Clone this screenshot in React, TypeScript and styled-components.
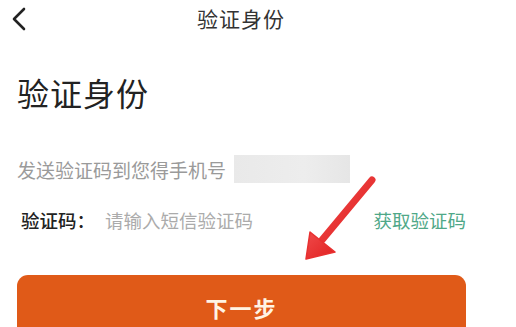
import React from 'react'
import styled, { createGlobalStyle } from 'styled-components'

const GlobalStyle = createGlobalStyle`
	html, body {
		margin: 0;
		padding: 0;
		background: #ffffff;
		font-family: 'Noto Sans CJK SC', 'Noto Sans', sans-serif;
		overflow: hidden;
	}
`

const Page = styled.div`
	position: relative;
	width: 516px;
	height: 327px;
	overflow: hidden;
	background: #ffffff;
`

const Header = styled.div`
	display: grid;
	grid-template-columns: 60px 1fr 94px;
	align-items: center;
	height: 35px;
`

const BackButton = styled.div`
	display: flex;
	align-items: center;
	padding-left: 11px;
	padding-top: 3px;
`

const HeaderTitle = styled.div`
	text-align: center;
	font-size: 21px;
	color: #333333;
	letter-spacing: 1px;
`

const Content = styled.div`
	padding: 0 50px 0 17px;
`

const Heading = styled.h1`
	margin: 37px 0 0;
	font-size: 32px;
	line-height: 40px;
	font-weight: 400;
	color: #222222;
	letter-spacing: 1px;
`

const PhoneRow = styled.div`
	display: flex;
	align-items: center;
	gap: 8px;
	margin-top: 43px;
	height: 28px;
`

const Hint = styled.span`
	font-size: 19px;
	color: #9a9a9a;
`

const MaskedPhone = styled.div`
	width: 116px;
	height: 28px;
	background: linear-gradient(90deg, #e9e9e9, #ededed 60%, #e6e6e6);
`

const CodeRow = styled.div`
	display: flex;
	align-items: center;
	margin-top: 23px;
	height: 28px;
	padding-left: 4px;
`

const Label = styled.span`
	width: 84px;
	font-size: 18.5px;
	font-weight: 500;
	color: #222222;
`

const CodeInput = styled.input`
	flex: 1;
	border: none;
	outline: none;
	padding: 0;
	font-family: inherit;
	font-size: 18.5px;
	background: transparent;
	color: #333333;
	&::placeholder {
		color: #ababab;
	}
`

const SendLink = styled.span`
	font-size: 18.5px;
	color: #4fa888;
`

const NextButton = styled.button`
	display: flex;
	align-items: center;
	justify-content: center;
	width: 100%;
	height: 64px;
	margin-top: 41px;
	border: none;
	border-radius: 11px;
	background: #e05a18;
	color: #fff4e4;
	font-family: inherit;
	font-size: 22px;
	font-weight: 700;
	letter-spacing: 2px;
`

const ArrowLayer = styled.svg`
	position: absolute;
	left: 0;
	top: 0;
	pointer-events: none;
`

const App = () => {
	return (
		<Page>
			<GlobalStyle />
			<Header>
				<BackButton>
					<svg width='16' height='24' viewBox='0 0 16 24'>
						<path d='M13 2 L3 12 L13 22' fill='none' stroke='#222' strokeWidth='2.6' strokeLinecap='round' strokeLinejoin='round' />
					</svg>
				</BackButton>
				<HeaderTitle>验证身份</HeaderTitle>
				<div />
			</Header>

			<Content>
				<Heading>验证身份</Heading>

				<PhoneRow>
					<Hint>发送验证码到您得手机号</Hint>
					<MaskedPhone />
				</PhoneRow>

				<CodeRow>
					<Label>验证码：</Label>
					<CodeInput placeholder='请输入短信验证码' />
					<SendLink>获取验证码</SendLink>
				</CodeRow>

				<NextButton>下一步</NextButton>
			</Content>

			<ArrowLayer width='516' height='327' viewBox='0 0 516 327'>
				<defs>
					<linearGradient id='arrowShade' x1='0' y1='0' x2='1' y2='1'>
						<stop offset='0' stopColor='#f04a4a' />
						<stop offset='1' stopColor='#e02020' />
					</linearGradient>
				</defs>
				<line x1='372' y1='180' x2='322' y2='240' stroke='url(#arrowShade)' strokeWidth='7' strokeLinecap='round' />
				<polygon points='306,259 310,232 335,252' fill='url(#arrowShade)' stroke='#e83030' strokeWidth='1.5' strokeLinejoin='round' />
			</ArrowLayer>
		</Page>
	)
}

export default App
